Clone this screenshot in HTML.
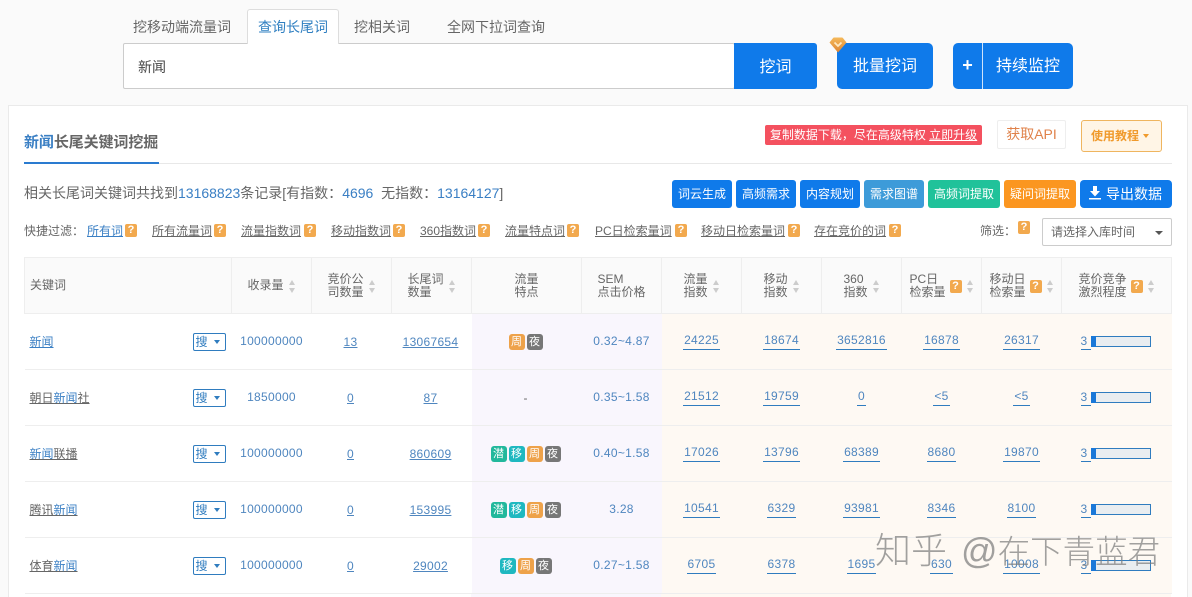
<!DOCTYPE html>
<html lang="zh">
<head>
<meta charset="utf-8">
<title>新闻长尾关键词挖掘</title>
<style>
*{box-sizing:border-box}
html,body{margin:0;padding:0;width:1192px;height:597px;overflow:hidden}
body{background:#fafafa;font-family:"Liberation Sans","Noto Sans CJK SC",sans-serif;font-size:12px;color:#666}
#w{position:relative;width:1192px;height:597px;overflow:hidden}
.a{position:absolute;white-space:nowrap}
.tab{top:19px;font-size:14px;line-height:16px;color:#666}
.btn{background:#0f7aea;color:#fff;text-align:center;border-radius:3px}
.tb{top:180px;height:28px;line-height:28px;font-size:12px;color:#fff;text-align:center;border-radius:3px;background:#0f7aea}
.f{top:224px;line-height:15px;font-size:12px;color:#666;text-decoration:underline}
.q{display:block;position:absolute;width:12px;height:13px;line-height:13px;border-radius:2px;background:#f2a94e;color:#fff;font-size:11px;font-weight:bold;text-align:center;font-style:normal}
table{position:absolute;left:24px;top:257px;width:1147px;border-collapse:collapse;table-layout:fixed;background:#fff}
th{height:56px;background:#fafafa;border:1px solid #eee;font-weight:normal;font-size:12px;line-height:13.5px;color:#666;padding:1px 0 0}
td{height:56px;border-bottom:1px solid #eee;text-align:center;padding:0;font-size:12px;color:#4f86bf;position:relative}
.g{display:inline-flex;align-items:center;text-align:left}
.s{display:inline-block;position:relative;width:7px;height:13px;margin-left:5px;flex:none}
.s:before,.s:after{content:"";position:absolute;left:0;border-left:3.5px solid transparent;border-right:3.5px solid transparent}
.s:before{top:0;border-bottom:5px solid #ccc}
.s:after{bottom:0;border-top:5px solid #ccc}
.hq{position:relative;display:inline-block;width:12px;height:13px;line-height:13px;border-radius:2px;background:#f2a94e;color:#fff;font-size:11px;font-weight:bold;text-align:center;margin-left:4px;flex:none;font-style:normal}
td.k{text-align:left;padding-left:5px;color:#666}
td a{text-decoration:underline}
.b{color:#3a7fc4}
.so{position:absolute;right:6px;top:19px;width:33px;height:18px;border:1px solid #2f7cbf;border-radius:2px;color:#2f7cbf;font-size:12px;line-height:16px;text-align:left;padding-left:2px;background:#fff}
.so:after{content:"";position:absolute;right:5px;top:6px;border-left:3.5px solid transparent;border-right:3.5px solid transparent;border-top:4px solid #2f7cbf}
.l{display:inline-block;border-bottom:1px solid #2f7cbf;padding:0 1px 2px;line-height:14px;position:relative;top:0;color:#4f86bf;letter-spacing:.3px}
.u{color:#4f86bf;text-decoration:underline;letter-spacing:.3px;position:relative;left:-1px}
.n{position:relative;top:-1px;letter-spacing:.3px}
td.p{background:#f9f6fd}
td.tg{padding-right:2px}
td.o{background:#fef9f3}
.t{display:inline-block;width:16px;height:16px;line-height:16px;border-radius:3px;color:#fff;font-size:11px;margin:0 1px;vertical-align:middle;text-align:center}
.c1{background:#22b89c}.c2{background:#1fb8c0}.c3{background:#eea24a}.c4{background:#777}
.bar{position:absolute;left:29px;top:22px;width:60px;height:11px;border:1px solid #2f7cbf;background:#e9edf0}
.bar:before{content:"";position:absolute;left:-1px;top:-1px;width:5px;height:11px;background:#1a78d8}
.v{position:absolute;left:19px;top:19px;width:10px;height:17px;line-height:16px;color:#4f86bf;border-bottom:1px solid #2f7cbf;text-align:left}
</style>
</head>
<body>
<div id="w">
<div class="a" style="left:247px;top:9px;width:92px;height:35px;background:#fff;border:1px solid #ddd;border-bottom:none;border-radius:3px 3px 0 0;z-index:2"></div>
<div class="a tab" style="left:133px">挖移动端流量词</div>
<div class="a tab" style="left:258px;color:#2f7fc1;z-index:3">查询长尾词</div>
<div class="a tab" style="left:354px">挖相关词</div>
<div class="a tab" style="left:447px">全网下拉词查询</div>

<div class="a" style="left:123px;top:43px;width:612px;height:46px;background:#fff;border:1px solid #ccc;border-radius:2px;font-size:14px;line-height:46px;padding-left:14px;color:#444">新闻</div>
<div class="a btn" style="left:734px;top:43px;width:83px;height:46px;line-height:49px;font-size:16px;border-radius:0 3px 3px 0">挖词</div>
<div class="a btn" style="left:837px;top:43px;width:96px;height:46px;line-height:47px;font-size:16px;border-radius:5px">批量挖词</div>
<svg class="a" style="left:829px;top:37px" width="18" height="16" viewBox="0 0 18 16"><defs><linearGradient id="d" x1="0" y1="0" x2="0" y2="1"><stop offset="0" stop-color="#f5b95a"/><stop offset="1" stop-color="#dd8432"/></linearGradient></defs><path d="M5 .5h8a1 1 0 0 1 .8.4L17.500 5.500 9 15.500.5 5.500 4.200.9A1 1 0 0 1 5 .5z" fill="url(#d)"/><path d="M5.500 5.500L9 9l3.500-3.500" fill="none" stroke="#fde8c0" stroke-width="1.800"/></svg>
<div class="a btn" style="left:953px;top:43px;width:120px;height:46px;line-height:47px;font-size:16px;border-radius:5px;padding-left:30px">持续监控</div>
<div class="a" style="left:953px;top:43px;width:30px;height:46px;line-height:45px;text-align:center;color:#fff;font-size:18px;font-weight:bold;border-right:1px solid #cfe3fa">+</div>

<div class="a" style="left:8px;top:105px;width:1180px;height:492px;background:#fff;border:1px solid #eaeaea;border-bottom:none"></div>

<div class="a" style="left:24px;top:134px;font-size:15px;line-height:18px;font-weight:bold;color:#666;letter-spacing:-.1px"><span style="color:#3a7fc4">新闻</span>长尾关键词挖掘</div>
<div class="a" style="left:24px;top:163px;width:1148px;height:1px;background:#e8e8e8"></div>
<div class="a" style="left:24px;top:162px;width:135px;height:2px;background:#2a7bd0"></div>

<div class="a" style="left:765px;top:125px;width:217px;height:20px;line-height:20px;background:#f4515f;color:#fff;border-radius:2px;text-align:center;font-size:12px">复制数据下载，尽在高级特权 <span style="text-decoration:underline">立即升级</span></div>
<div class="a" style="left:997px;top:120px;width:69px;height:29px;line-height:27px;border:1px solid #eee;border-radius:2px;background:#fff;text-align:center;font-size:14px;color:#e0824a">获取API</div>
<div class="a" style="left:1081px;top:120px;width:81px;height:32px;line-height:30px;border:1px solid #efb55f;border-radius:3px;background:#fff5e6;color:#f09a2c;font-size:12px;font-weight:bold;padding-left:9px">使用教程<span style="display:inline-block;margin-left:4px;vertical-align:2px;border-left:3.5px solid transparent;border-right:3.5px solid transparent;border-top:4px solid #f09a2c"></span></div>

<div class="a" style="left:24px;top:185px;font-size:14px;line-height:17px;color:#666">相关长尾词关键词共找到<span class="b">13168823</span>条记录[有指数：<span class="b">4696</span>&nbsp; 无指数：<span class="b">13164127</span>]</div>

<div class="a tb" style="left:672px;width:60px">词云生成</div>
<div class="a tb" style="left:736px;width:60px">高频需求</div>
<div class="a tb" style="left:800px;width:60px">内容规划</div>
<div class="a tb" style="left:864px;width:60px;background:#3d9bd9">需求图谱</div>
<div class="a tb" style="left:928px;width:72px;background:#20c29a">高频词提取</div>
<div class="a tb" style="left:1004px;width:72px;background:#fb9620">疑问词提取</div>
<div class="a tb" style="left:1080px;width:92px;font-size:14px;border-radius:4px;padding-left:16px">导出数据</div>
<svg class="a" style="left:1089px;top:186px" width="13" height="15" viewBox="0 0 13 15"><path d="M4 0h4v5h3L6 10.500 1 5h3zM0 12h12v1.500H0z" fill="#fff"/></svg>

<div class="a f" style="left:24px;text-decoration:none">快捷过滤：</div>
<div class="a f" style="left:87px;color:#3a7fc4">所有词</div><i class="q a" style="left:125px;top:224px">?</i>
<div class="a f" style="left:152px">所有流量词</div><i class="q a" style="left:214px;top:224px">?</i>
<div class="a f" style="left:241px">流量指数词</div><i class="q a" style="left:304px;top:224px">?</i>
<div class="a f" style="left:331px">移动指数词</div><i class="q a" style="left:393px;top:224px">?</i>
<div class="a f" style="left:420px">360指数词</div><i class="q a" style="left:478px;top:224px">?</i>
<div class="a f" style="left:505px">流量特点词</div><i class="q a" style="left:567px;top:224px">?</i>
<div class="a f" style="left:595px">PC日检索量词</div><i class="q a" style="left:675px;top:224px">?</i>
<div class="a f" style="left:701px">移动日检索量词</div><i class="q a" style="left:788px;top:224px">?</i>
<div class="a f" style="left:814px">存在竞价的词</div><i class="q a" style="left:889px;top:224px">?</i>
<div class="a f" style="left:980px;text-decoration:none">筛选：</div><i class="q a" style="left:1018px;top:221px">?</i>
<div class="a" style="left:1042px;top:218px;width:130px;height:28px;line-height:26px;border:1px solid #ccc;background:#fff;border-radius:2px;padding-left:8px;color:#666;font-size:12px">请选择入库时间<span style="position:absolute;right:8px;top:12px;border-left:4px solid transparent;border-right:4px solid transparent;border-top:4px solid #555"></span></div>

<table>
<colgroup><col style="width:207px"><col style="width:80px"><col style="width:80px"><col style="width:80px"><col style="width:110px"><col style="width:80px"><col style="width:80px"><col style="width:80px"><col style="width:80px"><col style="width:80px"><col style="width:80px"><col style="width:110px"></colgroup>
<tr>
<th style="text-align:left;padding-left:5px">关键词</th>
<th><span class="g">收录量<i class="s"></i></span></th>
<th><span class="g"><span>竞价公<br>司数量</span><i class="s"></i></span></th>
<th><span class="g"><span>长尾词<br>数量</span><i class="s"></i></span></th>
<th>流量<br>特点</th>
<th><span class="g"><span>SEM<br>点击价格</span></span></th>
<th><span class="g"><span>流量<br>指数</span><i class="s"></i></span></th>
<th><span class="g"><span>移动<br>指数</span><i class="s"></i></span></th>
<th><span class="g"><span>360<br>指数</span><i class="s"></i></span></th>
<th><span class="g"><span>PC日<br>检索量</span><i class="hq">?</i><i class="s"></i></span></th>
<th><span class="g"><span>移动日<br>检索量</span><i class="hq">?</i><i class="s"></i></span></th>
<th><span class="g"><span>竞价竞争<br>激烈程度</span><i class="hq">?</i><i class="s"></i></span></th>
</tr>
<tr>
<td class="k"><a class="b">新闻</a><span class="so">搜</span></td><td><span class="n">100000000</span></td><td><span class="u">13</span></td><td><span class="u">13067654</span></td>
<td class="p tg"><span class="t c3">周</span><span class="t c4">夜</span></td><td class="p"><span class="n">0.32~4.87</span></td>
<td class="o"><span class="l">24225</span></td><td class="o"><span class="l">18674</span></td><td class="o"><span class="l">3652816</span></td><td class="o"><span class="l">16878</span></td><td class="o"><span class="l">26317</span></td><td class="o"><span class="v">3</span><span class="bar"></span></td>
</tr>
<tr>
<td class="k"><a>朝日<span class="b">新闻</span>社</a><span class="so">搜</span></td><td><span class="n">1850000</span></td><td><span class="u">0</span></td><td><span class="u">87</span></td>
<td class="p tg" style="color:#666">-</td><td class="p"><span class="n">0.35~1.58</span></td>
<td class="o"><span class="l">21512</span></td><td class="o"><span class="l">19759</span></td><td class="o"><span class="l">0</span></td><td class="o"><span class="l">&lt;5</span></td><td class="o"><span class="l">&lt;5</span></td><td class="o"><span class="v">3</span><span class="bar"></span></td>
</tr>
<tr>
<td class="k"><a><span class="b">新闻</span>联播</a><span class="so">搜</span></td><td><span class="n">100000000</span></td><td><span class="u">0</span></td><td><span class="u">860609</span></td>
<td class="p tg"><span class="t c1">潜</span><span class="t c2">移</span><span class="t c3">周</span><span class="t c4">夜</span></td><td class="p"><span class="n">0.40~1.58</span></td>
<td class="o"><span class="l">17026</span></td><td class="o"><span class="l">13796</span></td><td class="o"><span class="l">68389</span></td><td class="o"><span class="l">8680</span></td><td class="o"><span class="l">19870</span></td><td class="o"><span class="v">3</span><span class="bar"></span></td>
</tr>
<tr>
<td class="k"><a>腾讯<span class="b">新闻</span></a><span class="so">搜</span></td><td><span class="n">100000000</span></td><td><span class="u">0</span></td><td><span class="u">153995</span></td>
<td class="p tg"><span class="t c1">潜</span><span class="t c2">移</span><span class="t c3">周</span><span class="t c4">夜</span></td><td class="p"><span class="n">3.28</span></td>
<td class="o"><span class="l">10541</span></td><td class="o"><span class="l">6329</span></td><td class="o"><span class="l">93981</span></td><td class="o"><span class="l">8346</span></td><td class="o"><span class="l">8100</span></td><td class="o"><span class="v">3</span><span class="bar"></span></td>
</tr>
<tr>
<td class="k"><a>体育<span class="b">新闻</span></a><span class="so">搜</span></td><td><span class="n">100000000</span></td><td><span class="u">0</span></td><td><span class="u">29002</span></td>
<td class="p tg"><span class="t c2">移</span><span class="t c3">周</span><span class="t c4">夜</span></td><td class="p"><span class="n">0.27~1.58</span></td>
<td class="o"><span class="l">6705</span></td><td class="o"><span class="l">6378</span></td><td class="o"><span class="l">1695</span></td><td class="o"><span class="l">630</span></td><td class="o"><span class="l">10008</span></td><td class="o"><span class="v">3</span><span class="bar"></span></td>
</tr>
</table>
<div class="a" style="left:471px;top:594px;width:190px;height:3px;background:#f9f6fd"></div>
<div class="a" style="left:661px;top:594px;width:510px;height:3px;background:#fef9f3"></div>

<div class="a" style="left:875px;top:528px;font-size:36px;line-height:40px;height:40px;color:rgba(125,125,125,.72);z-index:5;font-family:'Noto Sans CJK SC',sans-serif;font-weight:300">知乎<span style="font-family:'Liberation Sans',sans-serif;margin-left:14px">@</span><span style="font-size:32.500px">在下青蓝君</span></div>
</div>
</body>
</html>
